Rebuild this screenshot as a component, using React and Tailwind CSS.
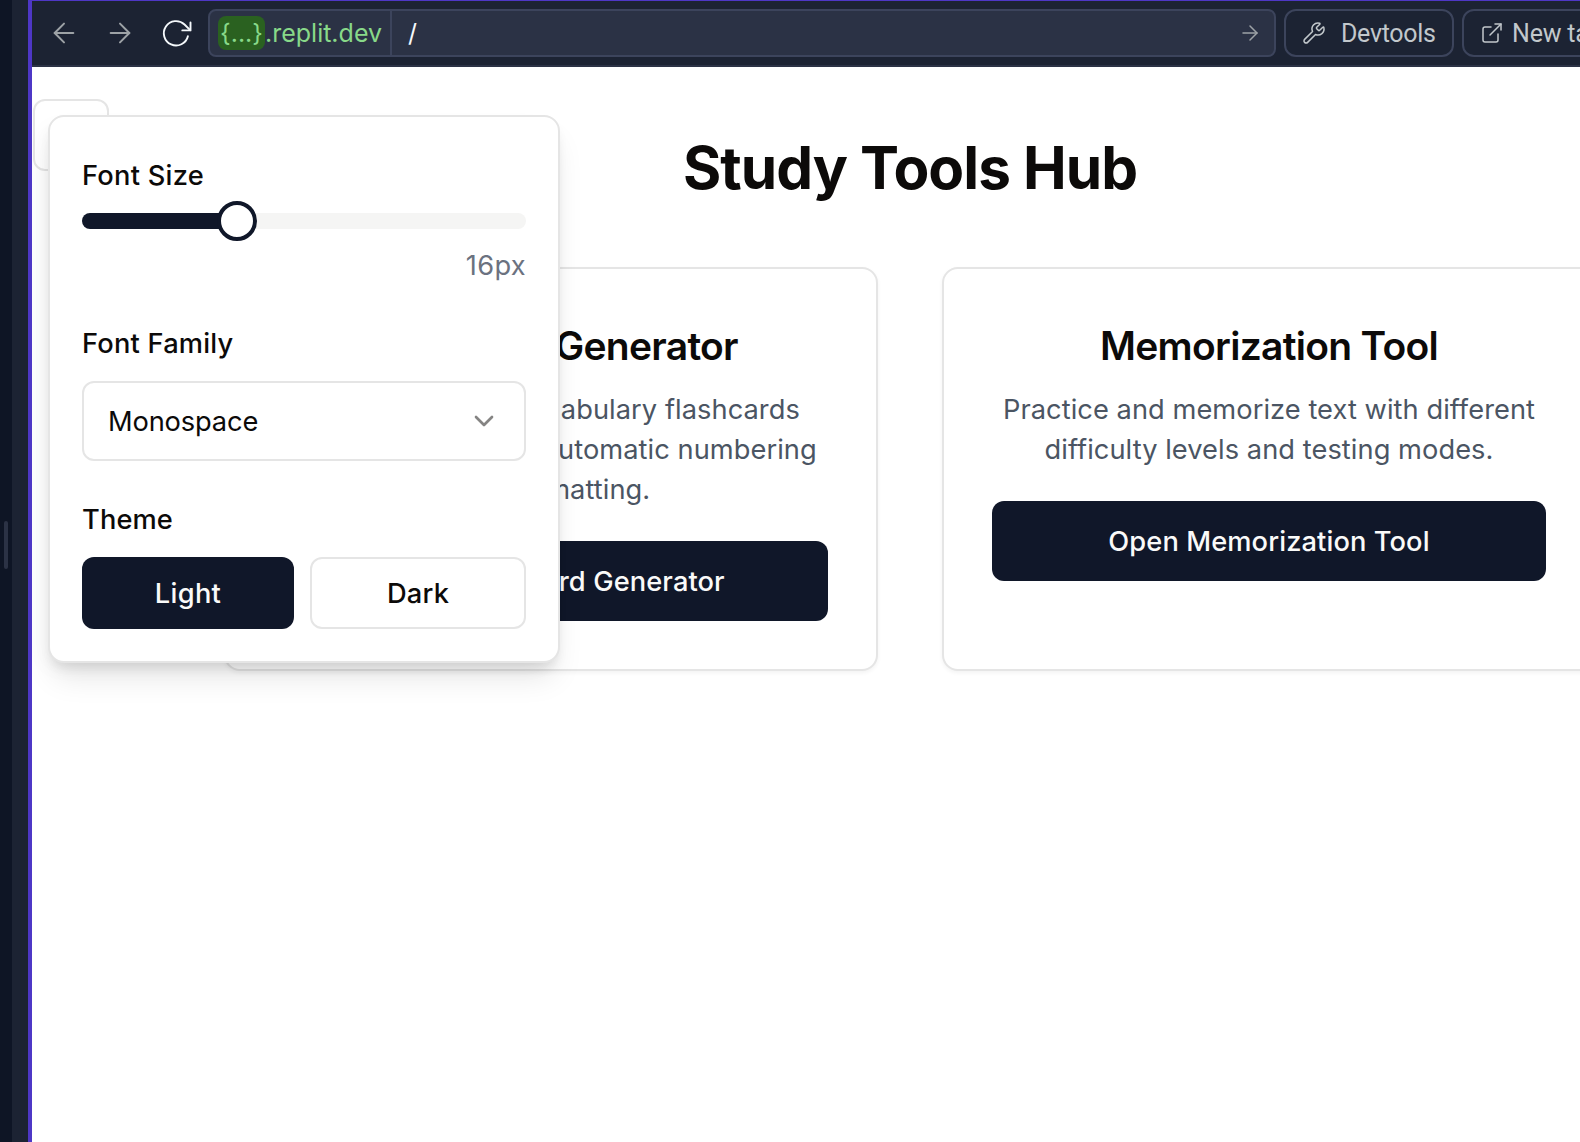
import { ArrowLeft, ArrowRight, ChevronDown, Wrench, ExternalLink } from "lucide-react";

function Refresh() {
  return (
    <svg width="32" height="32" viewBox="0 0 32 32" fill="none" stroke="#f5f9fc" strokeWidth="1.9" strokeLinecap="round" strokeLinejoin="round">
      <path d="M30.500 5.500v7.900h-8.200" />
      <path d="M30.200 13.200L24.500 7.500A12.200 12.200 0 1 0 27.900 19.200" />
    </svg>
  );
}

function Toolbar() {
  return (
    <header className="flex h-[66px] shrink-0 items-start gap-2 border-b-2 border-[#2b3245] bg-[#1c2333] pt-2 text-[25px] text-[#c2c8cc]">
      <div className="flex h-12 w-[168px] shrink-0 items-center gap-6 pl-4 text-[#9da2a6]">
        <ArrowLeft size={32} strokeWidth={1.5} />
        <ArrowRight size={32} strokeWidth={1.5} />
        <Refresh />
      </div>
      <div className="flex h-12 w-[1068px] shrink-0 items-center rounded-lg border-2 border-[#3c445c] bg-[#2b3245]">
        <div className="flex h-full w-[182px] items-center border-r-2 border-[#3c445c] pl-2 text-[#88d989]">
          <span className="flex h-[34px] w-[47px] items-center justify-center rounded-lg bg-[#2a6120] pt-0.5">{"{...}"}</span>
          <span className="pt-0.5">.replit.dev</span>
        </div>
        <span className="pt-0.5 pl-4 text-[#f5f9fc]">/</span>
        <ArrowRight size={24} strokeWidth={1.5} className="mr-3 ml-auto text-[#9da2a6]" />
      </div>
      <button className="flex h-12 w-[170px] shrink-0 items-center rounded-xl border-2 border-[#3c445c] pl-4">
        <Wrench size={24} strokeWidth={1.5} />
        <span className="ml-[15px] pt-0.5 font-['Roboto',sans-serif] tracking-[-0.3px]">Devtools</span>
      </button>
      <button className="flex h-12 w-[170px] shrink-0 items-center rounded-xl border-2 border-[#3c445c] pl-4">
        <ExternalLink size={24} strokeWidth={1.5} />
        <span className="ml-2 pt-0.5 font-['Roboto',sans-serif] tracking-[-0.2px] whitespace-nowrap">New tab</span>
      </button>
    </header>
  );
}

function ToolCard({ title, children, action }) {
  return (
    <section className="h-[404px] w-[654px] shrink-0 rounded-2xl border-2 border-[#e5e5e5] bg-white p-12 text-center shadow-[0_2px_4px_rgba(0,0,0,0.05)]">
      <h2 className="mb-[17px] h-14 pt-px text-[39px] leading-[56px] font-semibold tracking-[-0.72px] text-[#0c0a09]">{title}</h2>
      <div className="mb-[31px] text-[27.25px] leading-10 tracking-[0.05px] whitespace-nowrap text-[#4b5563]">
        {children}
      </div>
      <button className="h-20 w-full rounded-xl bg-[#101729] pt-0.5 text-[27.25px] font-medium tracking-[0.1px] text-[#fafaf9]">{action}</button>
    </section>
  );
}

function SettingsPopover() {
  return (
    <aside className="absolute top-12 left-4 h-[548px] w-[512px] rounded-2xl border-2 border-[#e5e5e5] bg-white px-8 pt-[38px] text-[27.25px] text-[#0c0a09] shadow-[0_20px_30px_-6px_rgba(0,0,0,0.1),0_8px_12px_-4px_rgba(0,0,0,0.1),-8px_8px_24px_-4px_rgba(0,0,0,0.03)]">
      <div className="h-10 pt-px leading-10 font-medium tracking-[0.25px]">Font Size</div>
      <div className="mt-1.5 flex h-10 items-center">
        <div className="h-4 w-[139px] rounded-l-full bg-[#101729]" />
        <div className="z-10 -ml-1 size-10 rounded-full border-4 border-[#101729] bg-white" />
        <div className="-ml-1 h-4 flex-1 rounded-r-full bg-[#f5f5f4]" />
      </div>
      <div className="mt-1 h-10 pt-px text-right leading-10 tracking-[0.3px] text-[#6b7280]">16px</div>
      <div className="mt-[38px] h-10 pt-px leading-10 font-medium tracking-[0.2px]">Font Family</div>
      <div className="mt-[18px] flex h-20 items-center justify-between rounded-xl border-2 border-[#e5e5e5] px-6">
        <span className="pt-0.5 tracking-[-0.15px]">Monospace</span>
        <ChevronDown size={32} className="text-[#858483]" />
      </div>
      <div className="mt-[38px] h-10 pt-px leading-10 font-medium tracking-[0.1px]">Theme</div>
      <div className="mt-[18px] flex h-[72px] gap-4">
        <button className="w-[212px] rounded-xl bg-[#101729] pt-0.5 font-medium tracking-[0.3px] text-[#fafaf9]">Light</button>
        <button className="w-[216px] rounded-xl border-2 border-[#e5e5e5] pt-0.5 font-medium tracking-[0.2px]">Dark</button>
      </div>
    </aside>
  );
}

export default function App() {
  return (
    <div className="flex h-[1142px] w-[1580px] overflow-hidden bg-[#1c2333] font-['Inter',sans-serif]">
      <div className="flex w-3 shrink-0 items-center bg-[#0e1525] pl-1">
        <div className="mb-[52px] h-12 w-1 rounded-full bg-[#2b3245]" />
      </div>
      <div className="w-4 shrink-0 bg-[#1c2333]" />
      <div className="flex min-w-0 flex-1 flex-col border-t border-l-4 border-t-[#4e37c6] border-l-[#4e37c6]">
        <Toolbar />
        <main className="relative flex-1 overflow-hidden bg-white">
          <div className="absolute top-8 left-px h-[72px] w-[76px] rounded-xl border-2 border-[#e5e5e5] bg-white" />
          <h1 className="h-[136px] w-[1756px] pt-[65px] text-center text-[58.5px] leading-[72px] font-bold tracking-[-0.95px] text-[#0c0a09]">Study Tools Hub</h1>
          <div className="mt-16 flex gap-16 pl-48">
            <ToolCard title={<span className="pl-[3px]">Flashcard Generator</span>} action={<span className="pl-0.5">Open Flashcard Generator</span>}>
              <p className="pr-[5px]">Create and print vocabulary flashcards</p>
              <p className="pl-1.5">from your text with automatic numbering</p>
              <p className="pl-0.5">and formatting.</p>
            </ToolCard>
            <ToolCard title="Memorization Tool" action="Open Memorization Tool">
              <p>Practice and memorize text with different</p>
              <p>difficulty levels and testing modes.</p>
            </ToolCard>
          </div>
          <SettingsPopover />
        </main>
      </div>
    </div>
  );
}
